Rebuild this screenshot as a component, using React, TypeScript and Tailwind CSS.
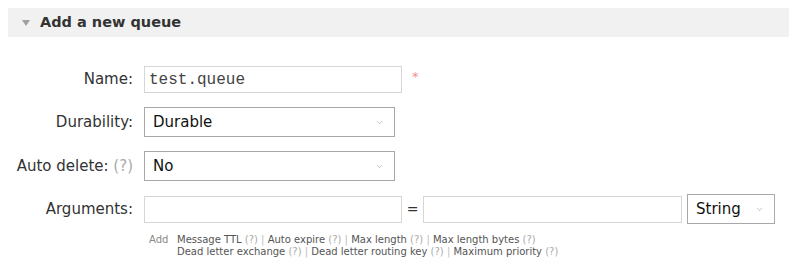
import { ChevronDown } from 'lucide-react';

function Chevron() {
  return <ChevronDown className="w-[9px] h-[9px] text-[#999]" strokeWidth={1.5} />;
}

function FakeSelect({ value, width }: { value: string; width: string }) {
  return (
    <div
      className={`${width} h-[30px] border border-[#a8a8a8] bg-white flex items-center justify-between pl-[8px] pr-[10px] text-[15px] text-[#111]`}
    >
      <span>{value}</span>
      <Chevron />
    </div>
  );
}

function Label({ children }: { children: React.ReactNode }) {
  return <div className="w-[134px] shrink-0 pr-[1px] text-right text-[15px] text-[#333]">{children}</div>;
}

export default function App() {
  const q = <span className="text-[#aaa]">(?)</span>;
  const sep = <span className="text-[#bbb]"> | </span>;
  return (
    <div className="w-[789px] h-[262px] bg-white font-['DejaVu_Sans',sans-serif] overflow-hidden pt-[8px]">
      <div className="ml-[8px] h-[29px] bg-[#f1f1f1] flex items-center">
        <svg width="8" height="6" viewBox="0 0 8 6" className="ml-[14px] mr-[10px]">
          <path d="M0 0 H8 L4 6 Z" fill="#a0a0a0" />
        </svg>
        <span className="font-bold text-[14.5px] text-[#333]">Add a new queue</span>
      </div>

      <div className="mt-[29px] flex items-center h-[27px]">
        <Label>Name:</Label>
        <div className="ml-[10px] w-[258px] h-[27px] border border-[#d6d6d6] flex items-center pl-[4px] font-['Liberation_Mono',monospace] text-[16px] text-[#444]">
          test.queue
        </div>
        <span className="ml-[10px] -mt-[6px] text-[13px] text-[#f09090]">*</span>
      </div>

      <div className="mt-[14px] flex items-center">
        <Label>Durability:</Label>
        <div className="ml-[10px]">
          <FakeSelect value="Durable" width="w-[251px]" />
        </div>
      </div>

      <div className="mt-[14px] flex items-center">
        <Label>
          Auto delete: {q}
        </Label>
        <div className="ml-[10px]">
          <FakeSelect value="No" width="w-[251px]" />
        </div>
      </div>

      <div className="mt-[13px] flex items-center">
        <Label>Arguments:</Label>
        <div className="ml-[10px] w-[258px] h-[27px] border border-[#d6d6d6]" />
        <span className="w-[21px] text-center text-[14px] text-[#333]">=</span>
        <div className="w-[259px] h-[27px] border border-[#d6d6d6]" />
        <div className="ml-[5px]">
          <FakeSelect value="String" width="w-[88px]" />
        </div>
      </div>

      <div className="mt-[10px] flex text-[10px] leading-[12px] text-[#555]">
        <span className="ml-[149px] w-[28px] text-[#888]">Add</span>
        <div>
          <div>
            Message TTL {q}
            {sep}Auto expire {q}
            {sep}Max length {q}
            {sep}Max length bytes {q}
          </div>
          <div>
            Dead letter exchange {q}
            {sep}Dead letter routing key {q}
            {sep}Maximum priority {q}
          </div>
        </div>
      </div>
    </div>
  );
}
